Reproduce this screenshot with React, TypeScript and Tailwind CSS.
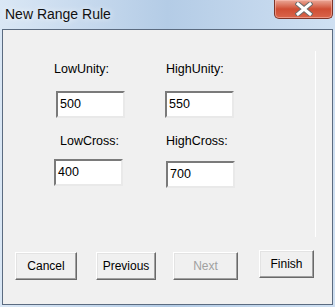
import React from "react";

const font = { fontFamily: '"Liberation Sans", Arial, sans-serif' };

const Field: React.FC<{ value: string; className?: string }> = ({ value, className }) => (
  <div
    className={
      "w-[69px] h-[27px] bg-white border-2 border-t-[#7a7a7a] border-l-[#7a7a7a] border-b-[#e9e9e9] border-r-[#e9e9e9] pl-[2px] text-[12.5px] leading-[23px] text-black " +
      (className || "")
    }
  >
    {value}
  </div>
);

const Btn: React.FC<{ label: string; w: string; disabled?: boolean; className?: string }> = ({
  label,
  w,
  disabled,
  className,
}) => (
  <div
    className={
      "h-[28px] flex items-center justify-center bg-[#f0f0f0] border border-t-white border-l-white border-b-[#696969] border-r-[#696969] shadow-[inset_-1px_-1px_0_#a0a0a0,inset_1px_1px_0_#e3e3e3] text-[12px] " +
      w +
      " " +
      (disabled ? "text-[#a0a0a0]" : "text-black") +
      " " +
      (className || "")
    }
  >
    {label}
  </div>
);

export default function App() {
  return (
    <div
      className="w-[335px] h-[307px] overflow-hidden flex flex-col bg-gradient-to-r from-[#dae7f5] via-[#b4cce6] to-[#cfe0f2]"
      style={font}
    >
      {/* title bar */}
      <div className="h-[29px] flex items-start relative">
        <span className="ml-[5px] mt-[5px] text-[14px] leading-[18px] text-[#111] [text-shadow:0_0_6px_#ffffff]">
          New Range Rule
        </span>
        <div className="absolute right-[2px] top-0 w-[59px] h-[19px] rounded-b-[5px] border border-t-0 border-[#7d3528] bg-gradient-to-b from-[#e9a797] via-[#cf4d33] to-[#d9654a] flex items-center justify-center shadow-[inset_0_0_0_1px_rgba(255,200,190,0.5)]">
          <svg width="18" height="14" viewBox="0 0 18 14">
            <path d="M3 2 L15 12 M15 2 L3 12" stroke="#6b6b6b" strokeWidth="5" strokeLinecap="square" />
            <path d="M3 2 L15 12 M15 2 L3 12" stroke="#ffffff" strokeWidth="3" strokeLinecap="square" />
          </svg>
        </div>
      </div>

      {/* client area */}
      <div className="ml-[2px] w-[331px] h-[276px] border border-[#5b6b80] bg-[#f0f0f0] flex flex-col">
        <div className="mt-[21px] w-[313px] h-[186px] border-r border-white flex pt-[10px] pl-[51px]">
          <div className="w-[111px] flex flex-col items-start">
            <div className="text-[12.5px] leading-[16px] text-black">LowUnity:</div>
            <Field value="500" className="mt-[14px] ml-[2px]" />
            <div className="mt-[15px] ml-[6px] text-[12.5px] leading-[16px] text-black">LowCross:</div>
            <Field value="400" className="mt-[10px]" />
          </div>
          <div className="flex flex-col items-start">
            <div className="ml-[1px] text-[12.5px] leading-[16px] text-black">HighUnity:</div>
            <Field value="550" className="mt-[14px]" />
            <div className="mt-[15px] ml-[1px] text-[12.5px] leading-[16px] text-black">HighCross:</div>
            <Field value="700" className="mt-[12px] ml-[1px]" />
          </div>
        </div>

        <div className="mt-[13px] ml-[12px] flex items-start">
          <Btn label="Cancel" w="w-[62px]" className="mt-[2px]" />
          <Btn label="Previous" w="w-[60px]" className="mt-[2px] ml-[19px]" />
          <Btn label="Next" w="w-[65px]" disabled className="mt-[2px] ml-[17px]" />
          <Btn label="Finish" w="w-[55px]" className="ml-[21px] h-[27px]" />
        </div>
      </div>
    </div>
  );
}
